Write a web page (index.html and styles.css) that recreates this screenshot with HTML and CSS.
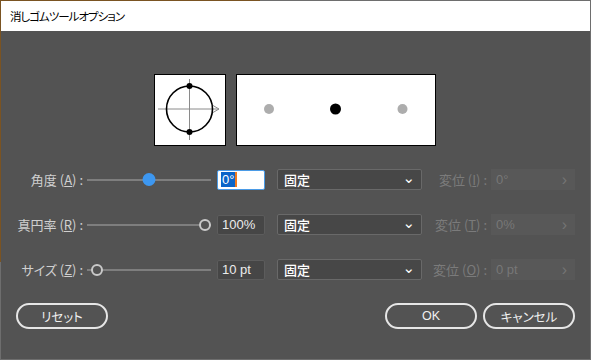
FILE: index.html
```html
<!DOCTYPE html>
<html lang="ja">
<head>
    <meta charset="UTF-8">
    <title>消しゴムツールオプション</title>
    <link rel="stylesheet" href="styles.css">
</head>
<body>
    <div class="window">
        <div class="titlebar">消しゴムツールオプション</div>

        <div class="content">
            <div class="preview">
                <div class="previewBox square">
                    <svg width="70" height="70" viewBox="0 0 70 70">
                        <line x1="3" y1="34" x2="64" y2="34" stroke="#8a8a8a" stroke-width="1"/>
                        <polyline points="58,30.5 64,34 58,37.5" fill="none" stroke="#8a8a8a" stroke-width="1"/>
                        <line x1="34.5" y1="4" x2="34.5" y2="65" stroke="#8a8a8a" stroke-width="1"/>
                        <circle cx="34.5" cy="34" r="23" fill="none" stroke="#000" stroke-width="1.6"/>
                        <circle cx="34.5" cy="11" r="3" fill="#000"/>
                        <circle cx="34.5" cy="57" r="3" fill="#000"/>
                    </svg>
                </div>
                <div class="previewBox wide">
                    <svg width="198" height="70" viewBox="0 0 198 70">
                        <circle cx="32" cy="34" r="5" fill="#adadad"/>
                        <circle cx="98.5" cy="34" r="5.5" fill="#000"/>
                        <circle cx="165.5" cy="34" r="5" fill="#adadad"/>
                    </svg>
                </div>
            </div>

            <div class="rows">
                <div class="row">
                    <label class="label">角度 (<u>A</u>) :</label>
                    <div class="slider">
                        <div class="track"></div>
                        <div class="thumb filled" style="left: 62px"></div>
                    </div>
                    <div class="numField active"><span class="sel">0°</span><span class="caret"></span></div>
                    <div class="select"><span>固定</span><span class="chev">&#8964;</span></div>
                    <label class="dimLabel">変位 (<u>I</u>) :</label>
                    <div class="dimField"><span>0°</span><span class="dimChev">&#8250;</span></div>
                </div>

                <div class="row">
                    <label class="label">真円率 (<u>R</u>) :</label>
                    <div class="slider">
                        <div class="track"></div>
                        <div class="thumb ring" style="left: 118px"></div>
                    </div>
                    <div class="numField">100%</div>
                    <div class="select"><span>固定</span><span class="chev">&#8964;</span></div>
                    <label class="dimLabel">変位 (<u>T</u>) :</label>
                    <div class="dimField"><span>0%</span><span class="dimChev">&#8250;</span></div>
                </div>

                <div class="row">
                    <label class="label">サイズ (<u>Z</u>) :</label>
                    <div class="slider">
                        <div class="track"></div>
                        <div class="thumb ring" style="left: 10px"></div>
                    </div>
                    <div class="numField">10 pt</div>
                    <div class="select"><span>固定</span><span class="chev">&#8964;</span></div>
                    <label class="dimLabel">変位 (<u>O</u>) :</label>
                    <div class="dimField"><span>0 pt</span><span class="dimChev">&#8250;</span></div>
                </div>
            </div>

            <div class="buttons">
                <button class="btn">リセット</button>
                <div class="rightButtons">
                    <button class="btn ok">OK</button>
                    <button class="btn">キャンセル</button>
                </div>
            </div>
        </div>
    </div>
</body>
</html>
```

FILE: styles.css
```css
html, body {
    margin: 0;
    padding: 0;
}

body {
    width: 591px;
    height: 360px;
    overflow: hidden;
    font-family: "Noto Sans CJK JP", "Noto Sans", sans-serif;
    font-size: 12px;
    font-feature-settings: "palt";
}

.window {
    box-sizing: border-box;
    width: 591px;
    height: 360px;
    padding: 1px;
    background:
        linear-gradient(to right, #7a5322 260px, #6e6e6e 260px) top / 100% 1px no-repeat,
        linear-gradient(#7a5322 262px, #6e6e6e 262px) left / 1px 100% no-repeat,
        #6e6e6e;
    display: flex;
    flex-direction: column;
}

.titlebar {
    height: 30px;
    background-color: #ffffff;
    color: #000000;
    padding-left: 9px;
    line-height: 30px;
    font-size: 11.5px;
    letter-spacing: -1px;
}

.content {
    flex: 1;
    background-color: #535353;
    color: #d2d2d2;
}

.preview {
    margin-top: 43px;
    padding-right: 1px;
    display: flex;
    justify-content: center;
    gap: 10px;
}

.previewBox {
    background-color: #ffffff;
    border: 1px solid #000000;
    height: 70px;
    line-height: 0;
}

.previewBox.square {
    width: 70px;
}

.previewBox.wide {
    width: 198px;
}

.rows {
    margin-top: 23px;
    display: flex;
    flex-direction: column;
    gap: 24px;
}

.row {
    display: flex;
    align-items: center;
    height: 21px;
}

.label {
    width: 82px;
    text-align: right;
    white-space: nowrap;
    color: #d0d0d0;
    font-size: 13px;
}

.slider {
    position: relative;
    width: 124px;
    height: 21px;
    margin-left: 4px;
}

.track {
    position: absolute;
    left: 0;
    right: 0;
    top: 10px;
    height: 2px;
    background-color: #7e7e7e;
}

.thumb {
    position: absolute;
    top: 4px;
    width: 13px;
    height: 13px;
    box-sizing: border-box;
    border-radius: 50%;
    transform: translateX(-50%);
}

.thumb.filled {
    background-color: #3d97f0;
}

.thumb.ring {
    width: 12px;
    height: 12px;
    top: 5px;
    border: 2px solid #c9c9c9;
    background-color: #535353;
}

.numField {
    box-sizing: border-box;
    width: 48px;
    height: 20px;
    margin-left: 6px;
    padding-left: 4px;
    background-color: #464646;
    border: 1px solid #5c5c5c;
    border-radius: 2px;
    color: #ececec;
    font-family: "Liberation Sans", sans-serif;
    font-size: 13px;
    line-height: 18px;
}

.numField.active {
    background-color: #ffffff;
    border-color: #4b9be6;
    color: #ffffff;
    display: flex;
    align-items: center;
    padding-left: 3px;
}

.sel {
    background-color: #0a64c8;
    line-height: 15px;
    padding: 0 1px;
}

.caret {
    width: 2px;
    height: 15px;
    background-color: #f07a1e;
}

.select {
    box-sizing: border-box;
    width: 145px;
    height: 21px;
    margin-left: 12px;
    padding: 0 6px 0 6px;
    background-color: #474747;
    border: 1px solid #696969;
    border-radius: 2px;
    color: #ffffff;
    font-weight: 500;
    font-size: 13px;
    display: flex;
    align-items: center;
    justify-content: space-between;
}

.chev {
    font-size: 15px;
    line-height: 8px;
    height: 12px;
    font-weight: normal;
    font-family: "DejaVu Sans", sans-serif;
}

.dimLabel {
    width: 56px;
    margin-left: 9px;
    text-align: right;
    white-space: nowrap;
    color: #7b7b7b;
    font-size: 13px;
}

.dimField {
    box-sizing: border-box;
    width: 84px;
    height: 21px;
    margin-left: 4px;
    padding: 0 8px 0 5px;
    background-color: #585858;
    color: #777777;
    font-family: "Liberation Sans", sans-serif;
    font-size: 13px;
    display: flex;
    align-items: center;
    justify-content: space-between;
}

.dimChev {
    font-size: 16px;
    color: #747474;
}

.buttons {
    margin-top: 23px;
    padding: 0 15px 0 15px;
    display: flex;
    justify-content: space-between;
}

.rightButtons {
    display: flex;
    gap: 6px;
}

.btn {
    box-sizing: border-box;
    width: 92px;
    height: 26px;
    border: 2px solid #e6e6e6;
    border-radius: 13px;
    background-color: #535353;
    color: #f0f0f0;
    font-family: "Noto Sans CJK JP", "Noto Sans", sans-serif;
    font-feature-settings: "palt";
    font-size: 12.5px;
    padding: 0;
}

.btn.ok {
    font-family: "Liberation Sans", sans-serif;
}
```
